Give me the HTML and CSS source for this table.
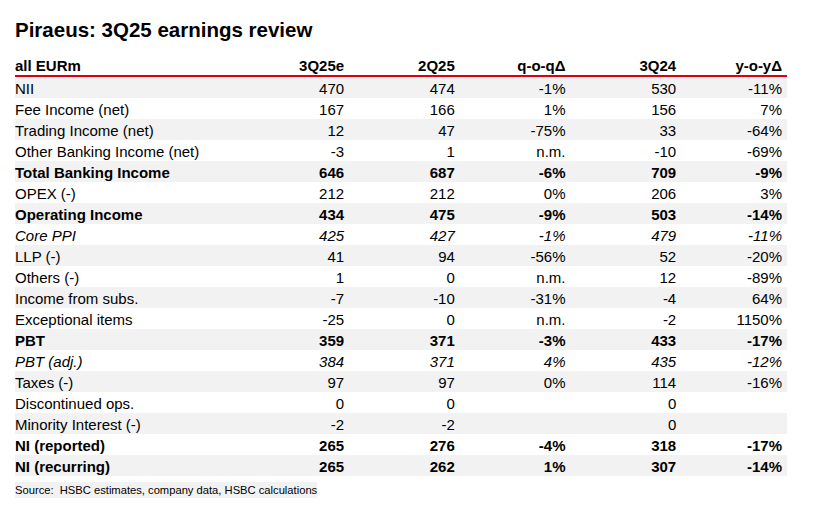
FILE: index.html
```html
<!DOCTYPE html>
<html lang="en">
<head>
<meta charset="utf-8">
<title>Piraeus: 3Q25 earnings review</title>
<link rel="stylesheet" href="styles.css">
</head>
<body>
<div class="page">
  <h1 class="title">Piraeus: 3Q25 earnings review</h1>
  <table class="fin">
    <colgroup>
      <col class="c-label">
      <col class="c-val"><col class="c-val"><col class="c-val"><col class="c-val"><col class="c-val">
    </colgroup>
    <thead>
      <tr><th>all EURm</th><th>3Q25e</th><th>2Q25</th><th>q-o-qΔ</th><th>3Q24</th><th>y-o-yΔ</th></tr>
    </thead>
    <tbody>
      <tr><td>NII</td><td>470</td><td>474</td><td>-1%</td><td>530</td><td>-11%</td></tr>
      <tr><td>Fee Income (net)</td><td>167</td><td>166</td><td>1%</td><td>156</td><td>7%</td></tr>
      <tr><td>Trading Income (net)</td><td>12</td><td>47</td><td>-75%</td><td>33</td><td>-64%</td></tr>
      <tr><td>Other Banking Income (net)</td><td>-3</td><td>1</td><td>n.m.</td><td>-10</td><td>-69%</td></tr>
      <tr class="bold"><td>Total Banking Income</td><td>646</td><td>687</td><td>-6%</td><td>709</td><td>-9%</td></tr>
      <tr><td>OPEX (-)</td><td>212</td><td>212</td><td>0%</td><td>206</td><td>3%</td></tr>
      <tr class="bold"><td>Operating Income</td><td>434</td><td>475</td><td>-9%</td><td>503</td><td>-14%</td></tr>
      <tr class="ital"><td>Core PPI</td><td>425</td><td>427</td><td>-1%</td><td>479</td><td>-11%</td></tr>
      <tr><td>LLP (-)</td><td>41</td><td>94</td><td>-56%</td><td>52</td><td>-20%</td></tr>
      <tr><td>Others (-)</td><td>1</td><td>0</td><td>n.m.</td><td>12</td><td>-89%</td></tr>
      <tr><td>Income from subs.</td><td>-7</td><td>-10</td><td>-31%</td><td>-4</td><td>64%</td></tr>
      <tr><td>Exceptional items</td><td>-25</td><td>0</td><td>n.m.</td><td>-2</td><td>1150%</td></tr>
      <tr class="bold"><td>PBT</td><td>359</td><td>371</td><td>-3%</td><td>433</td><td>-17%</td></tr>
      <tr class="ital"><td>PBT (adj.)</td><td>384</td><td>371</td><td>4%</td><td>435</td><td>-12%</td></tr>
      <tr><td>Taxes (-)</td><td>97</td><td>97</td><td>0%</td><td>114</td><td>-16%</td></tr>
      <tr><td>Discontinued ops.</td><td>0</td><td>0</td><td></td><td>0</td><td></td></tr>
      <tr><td>Minority Interest (-)</td><td>-2</td><td>-2</td><td></td><td>0</td><td></td></tr>
      <tr class="bold"><td>NI (reported)</td><td>265</td><td>276</td><td>-4%</td><td>318</td><td>-17%</td></tr>
      <tr class="bold"><td>NI (recurring)</td><td>265</td><td>262</td><td>1%</td><td>307</td><td>-14%</td></tr>
    </tbody>
  </table>
  <p class="source">Source:&nbsp; HSBC estimates, company data, HSBC calculations</p>
</div>
</body>
</html>
```

FILE: styles.css
```css
html, body {
  margin: 0;
  padding: 0;
  background: #ffffff;
}

body {
  font-family: "Liberation Sans", Arial, sans-serif;
  color: #000000;
}

.page {
  padding: 18px 0 0 15px;
  width: 772px;
}

.title {
  margin: 0;
  font-size: 20.5px;
  line-height: 24px;
  font-weight: bold;
}

.fin {
  margin-top: 14px;
  width: 772px;
  border-collapse: collapse;
  table-layout: fixed;
  font-size: 15px;
}

.c-label {
  width: 217px;
}

.c-val {
  width: 110px;
}

.fin th {
  font-weight: bold;
  height: 19px;
  line-height: 19px;
  padding: 0;
  text-align: right;
  vertical-align: top;
  border-bottom: 2px solid #db0011;
}

.fin th:first-child,
.fin td:first-child {
  text-align: left;
}

.fin th:last-child,
.fin td:last-child {
  padding-right: 5px;
}

.fin td {
  height: 21px;
  box-sizing: border-box;
  padding: 2px 0 0 0;
  line-height: 19px;
  text-align: right;
  vertical-align: top;
  white-space: nowrap;
}

.fin tbody tr:nth-child(odd) {
  background: #f2f2f2;
}

.fin tr.bold td {
  font-weight: bold;
}

.fin tr.ital td {
  font-style: italic;
}

.source {
  margin: 6px 0 0 0;
  display: inline-block;
  background: #f2f2f2;
  font-size: 11.2px;
  line-height: 16px;
}
```
